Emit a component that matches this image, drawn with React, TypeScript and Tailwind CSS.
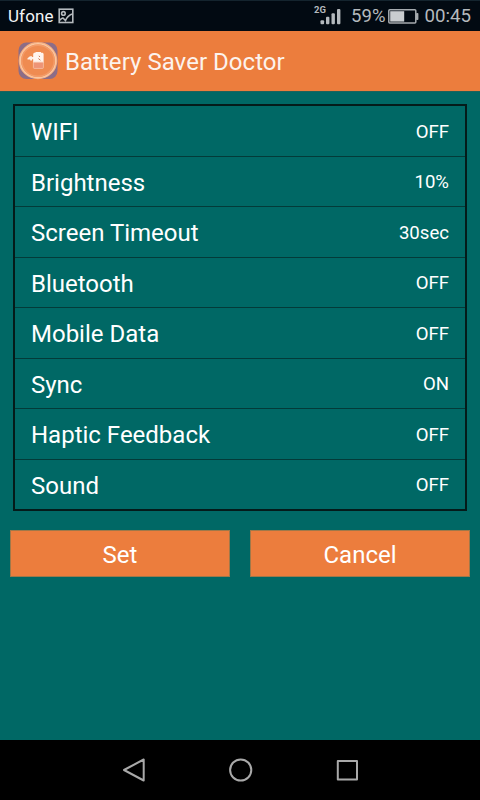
const settings = [
  { label: "WIFI", value: "OFF" },
  { label: "Brightness", value: "10%" },
  { label: "Screen Timeout", value: "30sec" },
  { label: "Bluetooth", value: "OFF" },
  { label: "Mobile Data", value: "OFF" },
  { label: "Sync", value: "ON" },
  { label: "Haptic Feedback", value: "OFF" },
  { label: "Sound", value: "OFF" },
];

function StatusBar() {
  return (
    <div className="h-[31px] shrink-0 bg-[#020a12] border-t border-[#14242e] flex items-center pl-2 pr-[9px] text-[#b4b9bd]">
      <span className="text-[17px] leading-none text-[#f2f4f5] tracking-[0.1px]">Ufone</span>
      {/* Screenshot notification */}
      <svg className="ml-1 shrink-0" width="16" height="16" viewBox="0 0 16 16" fill="none" stroke="#b4b9bd" strokeWidth="1.6">
        <rect x="1.2" y="1.2" width="13.6" height="13.3" />
        <circle cx="5.4" cy="5.4" r="1.8" />
        <path d="M2 12.2C3.5 10 5 9.6 6 11L7.5 12.5C8.5 10 10.5 7.5 14 6" />
      </svg>
      <div className="flex-1" />
      {/* Signal */}
      <div className="relative w-[28px] h-[21px] shrink-0">
        <span className="absolute left-0 top-[-1px] text-[9.5px] leading-[9px] font-bold">2G</span>
        <svg className="absolute left-0 top-0" width="28" height="21" viewBox="0 0 28 21" fill="currentColor">
          <rect x="6.5" y="14.2" width="3.6" height="4" rx="1" />
          <rect x="12" y="10.7" width="3.4" height="7.5" rx="1" />
          <rect x="17.5" y="7.2" width="3.4" height="11" rx="1" />
          <rect x="23" y="3" width="3.4" height="15.2" rx="1" />
        </svg>
      </div>
      <span className="ml-[9px] text-[18.5px] leading-none">59%</span>
      <svg className="ml-[3px] shrink-0" width="31" height="15" viewBox="0 0 31 15">
        <rect x="0.8" y="0.8" width="27" height="13.2" rx="1" fill="none" stroke="#a6abaf" strokeWidth="1.5" />
        <rect x="2.2" y="2.2" width="14" height="10.4" fill="#c9cdd0" />
        <rect x="28" y="4" width="2.4" height="7" rx="0.8" fill="#a6abaf" />
      </svg>
      <span className="ml-[5px] text-[18.7px] leading-none">00:45</span>
    </div>
  );
}

function AppIcon() {
  return (
    <svg width="40" height="38" viewBox="0 0 40 38" className="shrink-0">
      <rect x="0.5" y="0.5" width="39" height="36.5" rx="8" fill="#8c6d87" />
      <ellipse cx="20" cy="18.7" rx="18.7" ry="18" fill="#ef8b51" stroke="#f6ac7c" strokeWidth="1.2" />
      <ellipse cx="20" cy="18.7" rx="17.7" ry="17" fill="none" stroke="#fac6a0" strokeWidth="1.5" />
      <ellipse cx="20" cy="18.7" rx="16.2" ry="15.5" fill="none" stroke="#f39c69" strokeWidth="1.4" />
      {/* Plug */}
      <path d="M9.5 16.2L12 14.2H14V18.5H12.2V17.5H9.5ZM13.5 15H16.5V17.3H13.5Z" fill="#fdf0e8" />
      {/* Battery */}
      <path d="M15.2 11.8L16.2 10.8H17.5V10H23V10.8H24.6L25.6 11.8V21H15.2Z" fill="#fff5ef" />
      <rect x="15.4" y="20.2" width="10" height="6.2" rx="0.8" fill="#ee9476" stroke="#f8c3a8" strokeWidth="0.8" />
      <path d="M21 13.8L21.8 15M20.4 16.6L22.4 18.2" stroke="#c4714a" strokeWidth="0.9" />
    </svg>
  );
}

export default function App() {
  return (
    <div className="w-[480px] h-[800px] overflow-hidden flex flex-col bg-[#006865] font-['Roboto',sans-serif]">
      <StatusBar />

      {/* Title bar */}
      <header className="h-[60px] shrink-0 bg-[#ec7d3d] flex items-center pl-[18px] text-white">
        <AppIcon />
        <h1 className="ml-[7px] pt-[2px] text-[24px] tracking-[0.04px] whitespace-nowrap text-[#fcf3ed]">Battery Saver Doctor</h1>
      </header>

      <main className="flex-1 border-t border-[#1f625b] pt-3 text-white">
        {/* Settings list */}
        <ul className="mx-[13px] h-[407px] border-2 border-[#041b1a] flex flex-col">
          {settings.map((s) => (
            <li
              key={s.label}
              className="flex-1 flex items-center justify-between px-4 border-b border-[#033b39] last:border-b-0"
            >
              <span className="pt-[3px] text-[24px] leading-8">{s.label}</span>
              <span className="pt-[2px] text-[18.6px] leading-7">{s.value}</span>
            </li>
          ))}
        </ul>

        {/* Actions */}
        <div className="mt-[19px] px-[10px] flex gap-5">
          <button className="flex-1 h-[47px] bg-[#ec7d3d] border border-[#a07849] pt-[3px] text-[24px]">Set</button>
          <button className="flex-1 h-[47px] bg-[#ec7d3d] border border-[#a07849] pt-[3px] text-[24px]">Cancel</button>
        </div>
      </main>

      {/* Navigation bar */}
      <nav className="h-[60px] shrink-0 bg-black">
        <svg width="480" height="60" viewBox="0 0 480 60" fill="none" stroke="#a9a9a9" strokeWidth="2" strokeLinejoin="round">
          <path d="M124 30L143.7 19.5V40.5Z" />
          <circle cx="240.7" cy="30" r="10.6" />
          <rect x="337.8" y="21" width="19.2" height="18.5" />
        </svg>
      </nav>
    </div>
  );
}
